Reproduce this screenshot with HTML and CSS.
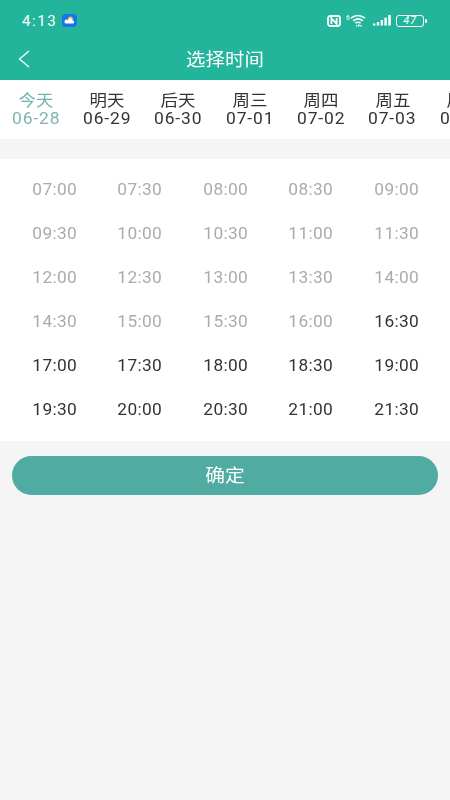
FILE: index.html
```html
<!DOCTYPE html>
<html lang="zh-CN">
<head>
<meta charset="utf-8">
<meta name="viewport" content="width=device-width,initial-scale=1">
<title>选择时间</title>
<link rel="stylesheet" href="styles.css">
</head>
<body>
<div class="top">
  <!-- status bar -->
  <div class="status">
    <div class="status-left">
      <span class="clock">4:13</span>
      <svg class="weather" width="15" height="13" viewBox="0 0 15 13" aria-hidden="true">
        <rect width="15" height="13" rx="4" fill="#1a73e8"/>
        <circle cx="8.5" cy="5" r="2.4" fill="#f6c445"/>
        <path d="M3.5 9.6h7a1.6 1.6 0 0 0 .2-3.2 2.6 2.6 0 0 0-4.900-.5 1.900 1.900 0 0 0-2.300 3.700z" fill="#fff"/>
      </svg>
    </div>
    <div class="status-right">
      <svg width="14" height="12" viewBox="0 0 14 12" aria-hidden="true">
        <rect x="1" y="1" width="12" height="10" rx="2.2" fill="none" stroke="#fff" stroke-width="1.8"/>
        <path d="M4.4 9V3.2L9.600 8.800V3" fill="none" stroke="#fff" stroke-width="1.800"/>
      </svg>
      <svg class="wifi" width="21" height="13" viewBox="0 0 21 13" aria-hidden="true">
        <text x="0" y="5.5" class="six">6</text>
        <g fill="none" stroke="#fff" stroke-width="1.6">
          <path d="M5 4.200c4-3.400 9.500-3.400 14 0"/>
          <path d="M7.200 6.800c3-2.300 6.700-2.300 9.600 0"/>
          <path d="M9.400 9.200c1.700-1.200 3.500-1.200 5.200 0"/>
        </g>
        <path d="M10 11h1.400v1.400H10zM12 10.600h1.600v1.800H12zM14.200 11h1.400v1.400h-1.400z" fill="#fff"/>
      </svg>
      <svg class="signal" width="18" height="11" viewBox="0 0 18 11" aria-hidden="true">
        <path d="M0 8.500h2.400v2H0zM3.800 7h2.400v3.500H3.800zM7.600 5H10v5.500H7.600zM11.400 2.700h2.400v7.800h-2.400zM15.200 0h2.600v10.500h-2.600z" fill="#fff"/>
      </svg>
      <div class="battery"><span class="level">47</span></div>
    </div>
  </div>
  <!-- nav -->
  <div class="nav">
    <svg class="back" width="14" height="18" viewBox="0 0 14 18" aria-hidden="true">
      <path d="M12 1L2.500 9l9.500 8" fill="none" stroke="#fff" stroke-width="1.300"/>
    </svg>
    <span class="nav-title">选择时间</span>
  </div>
</div>

<div class="tabs">
  <div class="tab on"><span class="day">今天</span><span class="date">06-28</span></div>
  <div class="tab"><span class="day">明天</span><span class="date">06-29</span></div>
  <div class="tab"><span class="day">后天</span><span class="date">06-30</span></div>
  <div class="tab"><span class="day">周三</span><span class="date">07-01</span></div>
  <div class="tab"><span class="day">周四</span><span class="date">07-02</span></div>
  <div class="tab"><span class="day">周五</span><span class="date">07-03</span></div>
  <div class="tab"><span class="day">周六</span><span class="date">07-04</span></div>
</div>

<div class="times">
  <div class="time off"><span>07:00</span></div>
  <div class="time off"><span>07:30</span></div>
  <div class="time off"><span>08:00</span></div>
  <div class="time off"><span>08:30</span></div>
  <div class="time off"><span>09:00</span></div>
  <div class="time off"><span>09:30</span></div>
  <div class="time off"><span>10:00</span></div>
  <div class="time off"><span>10:30</span></div>
  <div class="time off"><span>11:00</span></div>
  <div class="time off"><span>11:30</span></div>
  <div class="time off"><span>12:00</span></div>
  <div class="time off"><span>12:30</span></div>
  <div class="time off"><span>13:00</span></div>
  <div class="time off"><span>13:30</span></div>
  <div class="time off"><span>14:00</span></div>
  <div class="time off"><span>14:30</span></div>
  <div class="time off"><span>15:00</span></div>
  <div class="time off"><span>15:30</span></div>
  <div class="time off"><span>16:00</span></div>
  <div class="time"><span>16:30</span></div>
  <div class="time"><span>17:00</span></div>
  <div class="time"><span>17:30</span></div>
  <div class="time"><span>18:00</span></div>
  <div class="time"><span>18:30</span></div>
  <div class="time"><span>19:00</span></div>
  <div class="time"><span>19:30</span></div>
  <div class="time"><span>20:00</span></div>
  <div class="time"><span>20:30</span></div>
  <div class="time"><span>21:00</span></div>
  <div class="time"><span>21:30</span></div>
</div>

<div class="confirm"><span>确定</span></div>
</body>
</html>
```
FILE: styles.css
```css
:root{--green:#22b59c;--btn:#50aba2;--bg:#f5f5f5;--txt:#333;--muted:#ababab}
*{box-sizing:border-box}
html,body{height:100%}
body{margin:0;background:var(--bg);color:var(--txt);font-family:Roboto,"Noto Sans CJK SC",sans-serif;overflow:hidden}
.top{background:var(--green);color:#fff;height:80px}
.status{height:36px;display:flex;align-items:center;justify-content:space-between;padding:5px 26px 0 22px}
.status-left{display:flex;align-items:center;gap:5px}
.clock{font-size:15px;letter-spacing:1.6px}
.status-right{display:flex;align-items:center;gap:5px}
.six{font:7px Roboto,sans-serif;fill:#fff}
.signal{margin-left:1px}
.battery{position:relative;width:28px;height:12px;border:1px solid #fff;border-radius:3px;display:flex;align-items:center;justify-content:center}
.battery::after{content:"";position:absolute;right:-4px;top:3px;width:2px;height:4px;background:#fff;border-radius:1px}
.level{font-size:11px;font-style:italic;letter-spacing:.8px}
.nav{position:relative;height:44px;display:flex;align-items:center;justify-content:center}
.back{position:absolute;left:17px;top:14px}
.nav-title{font-size:18px;transform:scaleX(1.08);will-change:transform}
.tabs{height:59px;background:#fff;display:grid;grid-template-columns:repeat(7,71.4px);overflow:hidden;padding-top:12px}
.tab{display:flex;flex-direction:column;align-items:center;font-size:16px;line-height:18px}
.day{transform:scaleX(1.09);will-change:transform}
.date{letter-spacing:.8px;transform:scaleX(1.09);will-change:transform}
.tab.on .day{color:#6fb5b0}
.tab.on .date{color:#7fb3b3}
.times{margin-top:20px;background:#fff;display:grid;grid-template-columns:repeat(5,1fr);grid-auto-rows:44px;padding:8px 11px 10px}
.time{display:flex;align-items:center;justify-content:center;font-size:16px;padding-left:1px}
.time span{transform:scaleX(1.08);letter-spacing:.3px;will-change:transform}
.time.off{color:var(--muted)}
.confirm{margin:15px 12px 0;height:39px;border-radius:20px;background:var(--btn);color:#fff;font-size:18px;display:flex;align-items:center;justify-content:center;padding-bottom:4px}
.confirm span{transform:scaleX(1.1);will-change:transform}
```
